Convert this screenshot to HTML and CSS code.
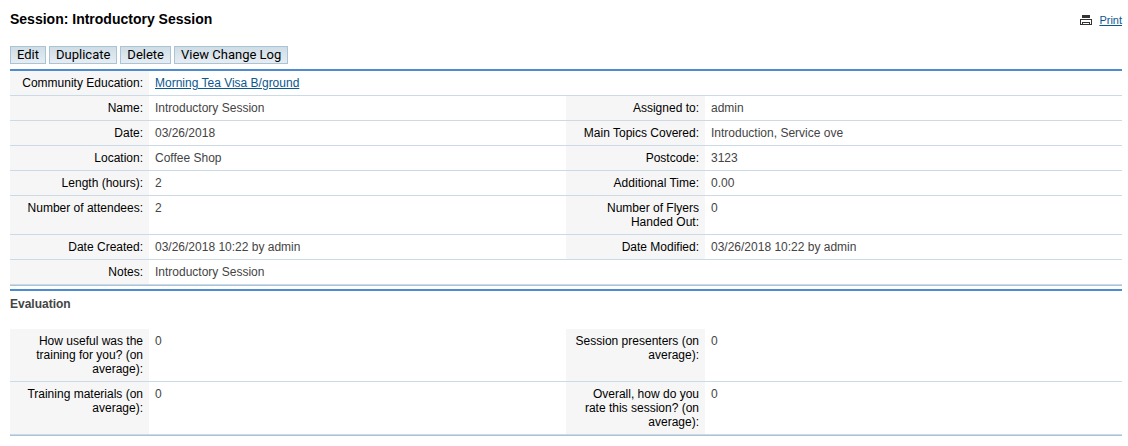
FILE: index.html
```html
<!DOCTYPE html>
<html lang="en">
<head>
<meta charset="UTF-8">
<meta name="viewport" content="width=device-width, initial-scale=1.0">
<title>Session: Introductory Session</title>
<link rel="stylesheet" href="styles.css">
</head>
<body>

<div class="moduleTitle">
  <h2>Session: Introductory Session</h2>
  <a href="#" class="utilsLink">
    <svg class="printIcon" width="12" height="10" viewBox="0 0 12 10" aria-hidden="true">
      <path fill="#333" fill-rule="evenodd" d="M2 0h8v3H2zM0 4h12v6H0zM1 5v4h1V7h8v2h1V5zM3 8v1h6V8z"/>
    </svg>
    <span>Print</span>
  </a>
</div>

<div class="actions">
  <button type="button" class="button">Edit</button>
  <button type="button" class="button">Duplicate</button>
  <button type="button" class="button">Delete</button>
  <button type="button" class="button">View Change Log</button>
</div>

<div class="detail">
  <table>
    <colgroup>
      <col class="label"><col class="value"><col class="label"><col class="value">
    </colgroup>
    <tr>
      <th scope="row">Community Education:</th>
      <td colspan="3"><a href="#">Morning Tea Visa B/ground</a></td>
    </tr>
    <tr>
      <th scope="row">Name:</th>
      <td>Introductory Session</td>
      <th scope="row">Assigned to:</th>
      <td>admin</td>
    </tr>
    <tr>
      <th scope="row">Date:</th>
      <td>03/26/2018</td>
      <th scope="row">Main Topics Covered:</th>
      <td>Introduction, Service ove</td>
    </tr>
    <tr>
      <th scope="row">Location:</th>
      <td>Coffee Shop</td>
      <th scope="row">Postcode:</th>
      <td>3123</td>
    </tr>
    <tr>
      <th scope="row">Length (hours):</th>
      <td>2</td>
      <th scope="row">Additional Time:</th>
      <td>0.00</td>
    </tr>
    <tr>
      <th scope="row">Number of attendees:</th>
      <td>2</td>
      <th scope="row">Number of Flyers Handed Out:</th>
      <td>0</td>
    </tr>
    <tr>
      <th scope="row">Date Created:</th>
      <td>03/26/2018 10:22 by admin</td>
      <th scope="row">Date Modified:</th>
      <td>03/26/2018 10:22 by admin</td>
    </tr>
    <tr>
      <th scope="row">Notes:</th>
      <td colspan="3">Introductory Session</td>
    </tr>
  </table>
</div>

<div class="detail">
  <h4>Evaluation</h4>
  <table>
    <colgroup>
      <col class="label"><col class="value"><col class="label"><col class="value">
    </colgroup>
    <tr>
      <th scope="row">How useful was the training for you? (on average):</th>
      <td>0</td>
      <th scope="row">Session presenters (on average):</th>
      <td>0</td>
    </tr>
    <tr>
      <th scope="row">Training materials (on average):</th>
      <td>0</td>
      <th scope="row">Overall, how do you rate this session? (on average):</th>
      <td>0</td>
    </tr>
  </table>
</div>

</body>
</html>
```
FILE: styles.css
```css
body { font-family: "Liberation Sans", Arial, sans-serif; font-size: 12px; line-height: 14px; color: #444; background: #fff; margin: 0; padding: 11px 6px 8px 10px; }
a { color: #0b578f; }

.moduleTitle { display: flex; justify-content: space-between; align-items: center; margin-bottom: 18px; }
.moduleTitle h2 { margin: 0; font-size: 14px; line-height: 17px; color: #000; }
.utilsLink { display: flex; align-items: center; gap: 7px; font-size: 11px; }

.actions { display: flex; gap: 3px; margin-bottom: 5px; }
.button { height: 18px; padding: 0 6px; font-family: Roboto, Inter, sans-serif; font-size: 13px; line-height: 16px; color: #000; background: linear-gradient(#cfdde6, #e6edf2); border: 1px solid #abc3d7; border-radius: 0; cursor: pointer; }
.button:hover { background: #cfdde6; }

.detail { border-top: 2px solid #4e8ccf; margin-bottom: 3px; }
.detail h4 { margin: 0; padding: 6px 0 18px; font-size: 12px; line-height: 14px; }
.detail table { width: 100%; table-layout: fixed; border-spacing: 0; border-bottom: 1px solid #abc3d7; }
.label { width: 12.5%; }
.value { width: 37.5%; }
th, td { padding: 5px 6px; border-bottom: 1px solid #cbdae6; text-align: left; vertical-align: top; }
th { font-weight: normal; text-align: right; color: #000; background: #f6f6f6; }
```
